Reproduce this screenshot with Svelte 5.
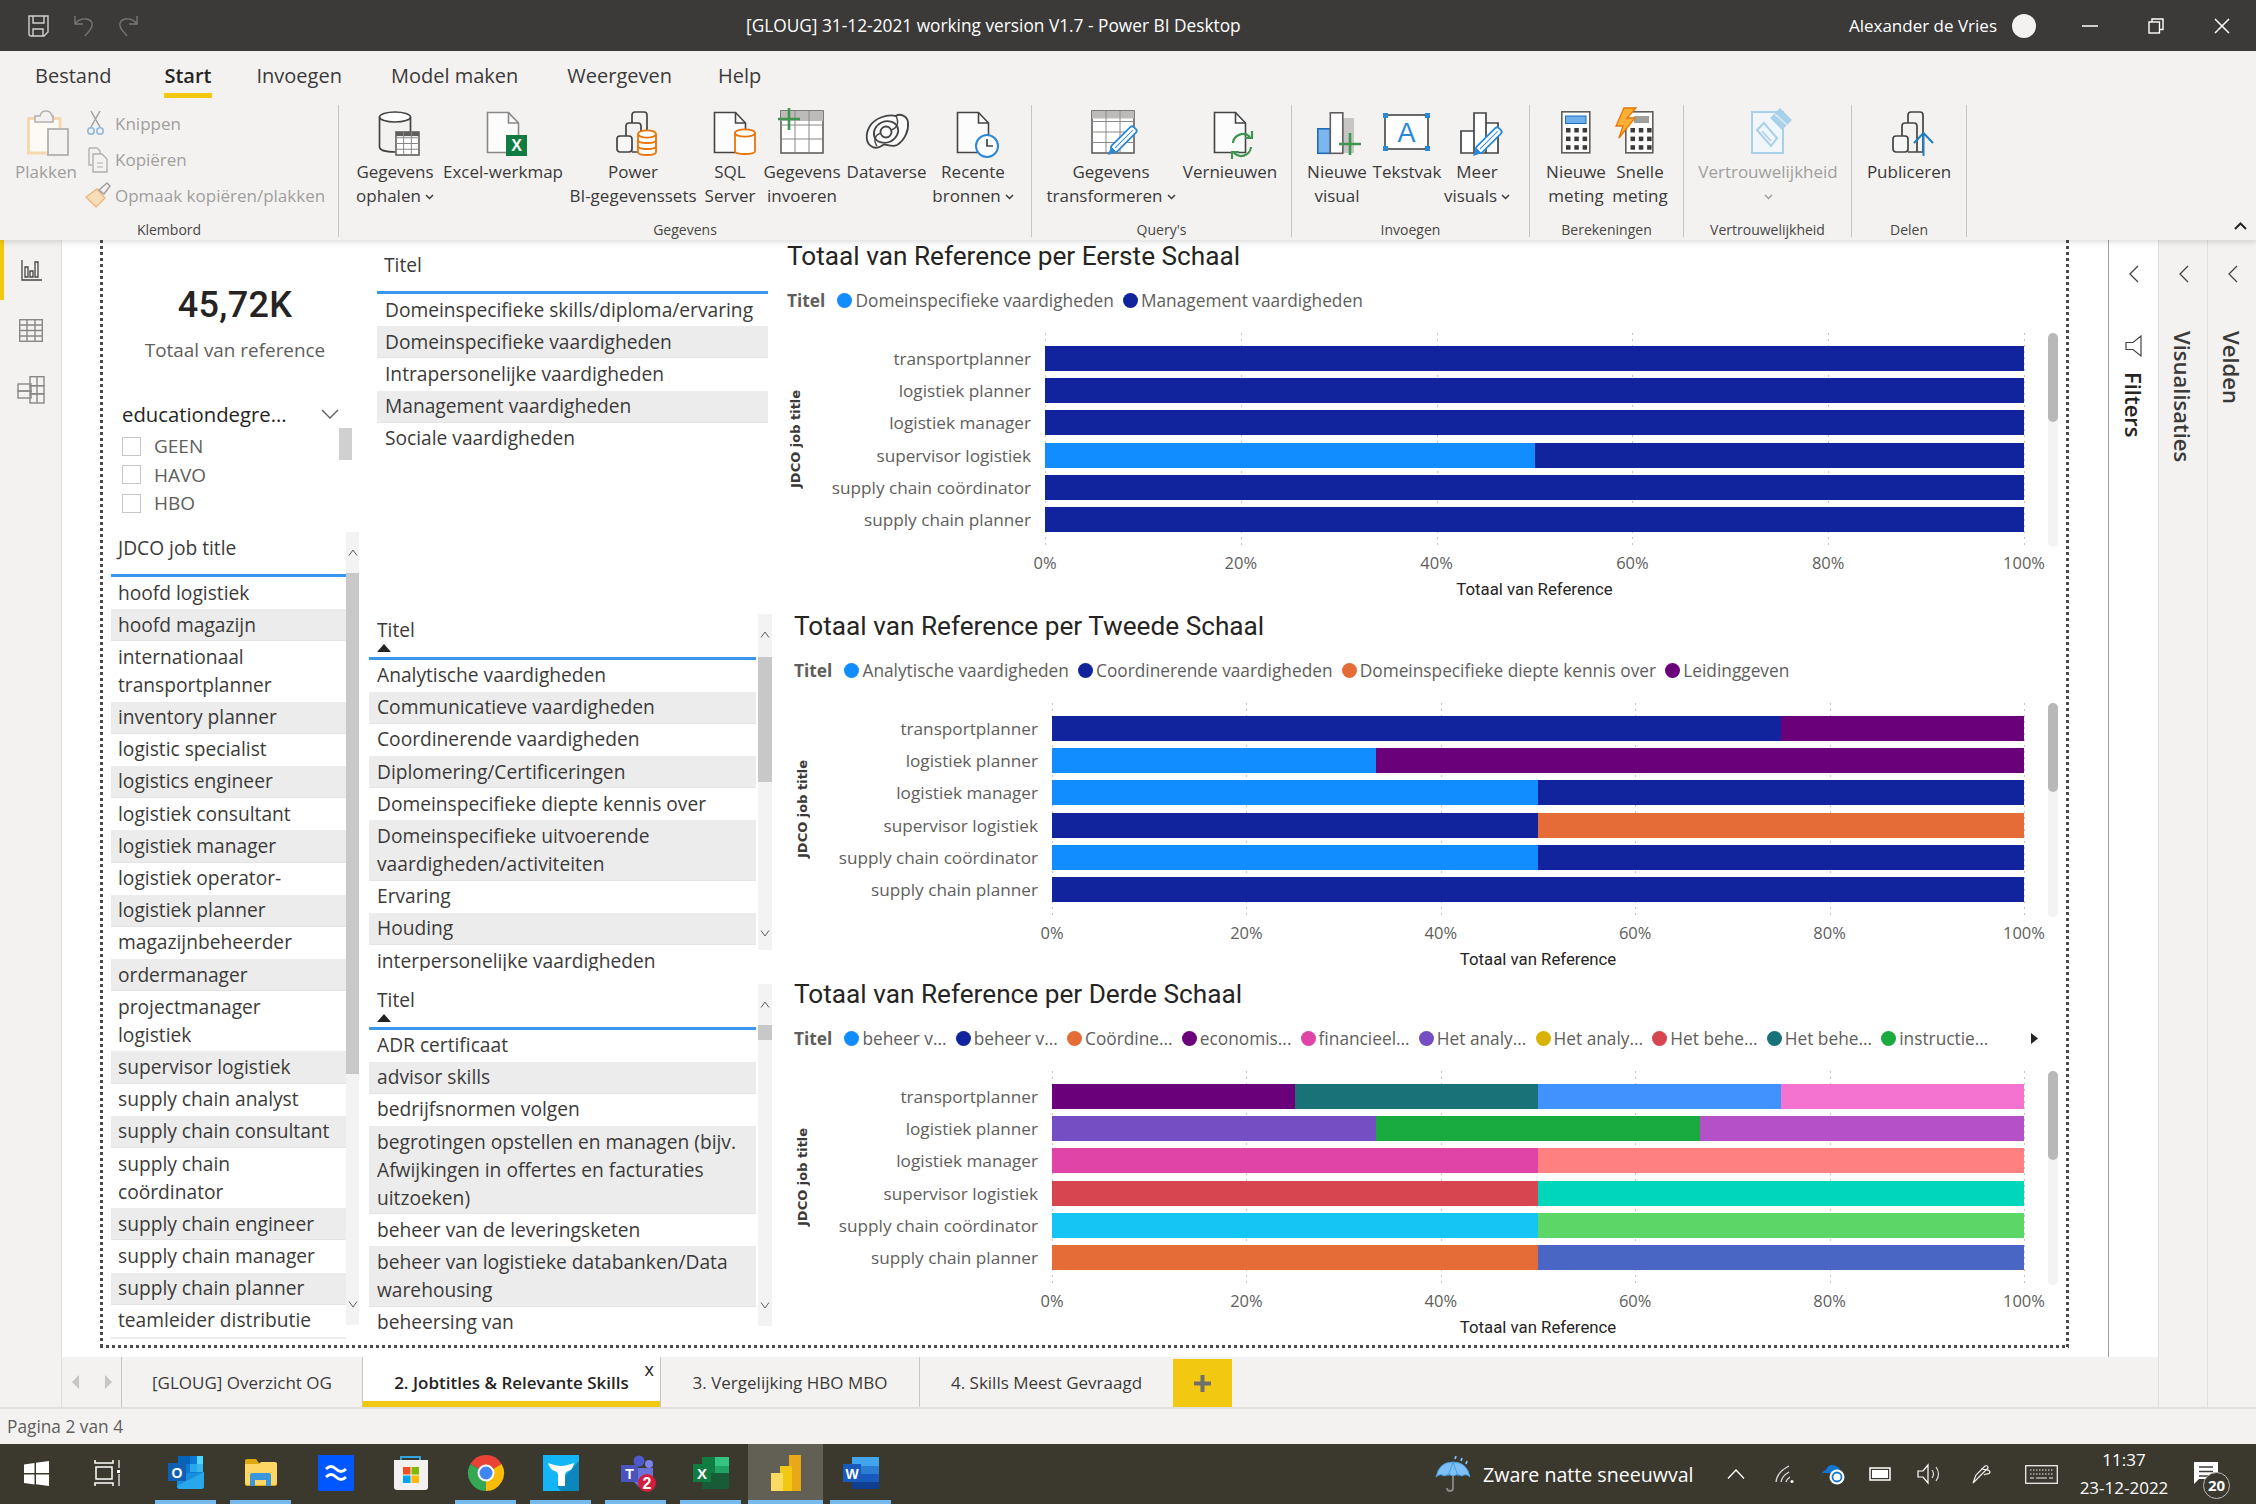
<script>
	const svg = (w, h, inner, box) =>
		`<svg xmlns="http://www.w3.org/2000/svg" width="${w}" height="${h}" viewBox="${box ?? `0 0 ${w} ${h}`}" fill="none" overflow="visible" display="block">${inner}</svg>`;

	const ORANGE = '#e8750a';
	const BLUE = '#2b88d8';
	const GREEN = '#3f9450';

	const doc = (s = '#444', x = 8.5) =>
		`<path d="M${x} 2.5H${x + 21}L${x + 31} 13V42.5H${x}Z" fill="#fcfcfc" stroke="${s}" stroke-width="1.6"/><path d="M${x + 21} 2.5V13H${x + 31}" stroke="${s}" stroke-width="1.6"/>`;
	const cyl = (cx, top, rx, bot, rings = []) =>
		`<path d="M${cx - rx} ${top}V${bot}c0 4 ${rx * 2} 4 ${rx * 2} 0V${top}" fill="#fff" stroke="${ORANGE}" stroke-width="1.8"/><ellipse cx="${cx}" cy="${top}" rx="${rx}" ry="3.6" fill="#fff" stroke="${ORANGE}" stroke-width="1.8"/>` +
		rings.map((r) => `<path d="M${cx - rx} ${r}c0 4 ${rx * 2} 4 ${rx * 2} 0" stroke="${ORANGE}" stroke-width="1.8"/>`).join('');
	const table = (x, y, w, h, cols, rows, head = '#bdbbb9') => {
		let out = `<rect x="${x}" y="${y}" width="${w}" height="${h}" fill="#fff" stroke="#605e5c" stroke-width="1.6"/><rect x="${x}" y="${y}" width="${w}" height="${h / (rows + 1) / 1.4}" fill="${head}"/>`;
		for (let i = 1; i < cols; i++) out += `<path d="M${x + (w * i) / cols} ${y}v${h}" stroke="#8a8886"/>`;
		for (let i = 1; i <= rows; i++) out += `<path d="M${x} ${y + (h * i) / (rows + 1)}h${w}" stroke="#8a8886"/>`;
		return out;
	};
	const pencil = (x, y) =>
		`<g transform="translate(${x} ${y}) rotate(45)"><rect x="-4" y="-38" width="8" height="31" rx="2.5" fill="#fff" stroke="${BLUE}" stroke-width="1.8"/><path d="M-4 -8H4L0 0Z" fill="${BLUE}"/><path d="M0 -35V-10" stroke="${BLUE}"/></g>`;
	const plus = (x, y, r = 11, c = GREEN) =>
		`<path d="M${x - r} ${y}H${x + r}M${x} ${y - r}V${y + r}" stroke="${c}" stroke-width="2.6"/>`;
	const bars = (s = '#444') =>
		`<path d="M23 13V5q0-3 3-3h9q3 0 3 3V42M17 26V16q0-3 3-3h9q3 0 3 3V42M23 42H38" stroke="${s}" stroke-width="1.7"/><rect x="8" y="26" width="15" height="16" rx="3" fill="#f7f7f7" stroke="${s}" stroke-width="1.7"/>`;
	const calcKeys = (x, y) => {
		let out = '';
		for (let r = 0; r < 3; r++)
			for (let c = 0; c < 3; c++)
				out += `<rect x="${x + c * 8.3}" y="${y + r * 8.6}" width="4.5" height="4.5" fill="#3b3a39"/>`;
		return out;
	};

	const ribbonIcons = {
		db: `<ellipse cx="24" cy="7" rx="15.5" ry="5" fill="#fff" stroke="#444" stroke-width="1.7"/><path d="M8.5 7V37c0 3 6 5 16 5M39.5 7V22" stroke="#444" stroke-width="1.7"/>${table(25, 22, 23, 23, 3, 3, '#605e5c')}`,
		excel: `${doc('#8a8886')}<rect x="27" y="25" width="21" height="21" fill="#107c41"/><text x="37.5" y="41" font-family="Liberation Sans" font-weight="700" font-size="16" fill="#fff" text-anchor="middle">X</text>`,
		dataset: `${bars()}${cyl(38, 24, 9, 42, [30, 36])}`,
		sql: `${doc('#444')}${cyl(39, 23, 10, 41)}`,
		enter: `${table(3, 1, 42, 42, 3, 2)}${plus(11, 9)}`,
		dataverse: `<path d="M8 36C3 33 2 24 7 16 12 8 24 4 33 6 37 3 44 6 45 12 46 20 42 30 34 35 28 38 23 33 20 35 16 38 12 39 8 36Z" fill="#fafafa" stroke="#444" stroke-width="1.8"/><ellipse cx="23" cy="22" rx="12.500" ry="10.500" transform="rotate(-25 23 22)" stroke="#444" stroke-width="1.800"/><circle cx="23" cy="22" r="5.500" stroke="#444" stroke-width="1.800"/><path d="M33 6C36 12 35 18 28 20M14 36C10 30 12 25 18 23" stroke="#444" stroke-width="1.400"/>`,
		recent: `${doc('#444')}<circle cx="38" cy="36" r="11" fill="#fff" stroke="${BLUE}" stroke-width="2"/><path d="M38 29v7h6" stroke="#444" stroke-width="1.7"/>`,
		transform: `${table(5, 1, 42, 42, 3, 3)}${pencil(21, 45)}`,
		refresh: `${doc('#444')}<path d="M27 33a10 10 0 0 1 17-6M45 37a10 10 0 0 1-17 6" stroke="${GREEN}" stroke-width="2.2"/><path d="M46 21v7h-7M26 49v-7h7" stroke="${GREEN}" stroke-width="2.2"/>`,
		visual: `<rect x="30" y="8" width="11" height="35" fill="#c8c6c4"/><rect x="4.8" y="18.8" width="12.5" height="24.5" fill="#7cb6ec" stroke="#1c6fb8" stroke-width="1.6"/><rect x="17.3" y="2.8" width="12.5" height="40.5" fill="#fff" stroke="#605e5c" stroke-width="1.6"/>${plus(37, 34)}`,
		text: `<rect x="2" y="5" width="43" height="34" fill="#fff" stroke="#444" stroke-width="1.6"/><path d="M0 3h5v5H0zM42 3h5v5h-5zM0 36h5v5H0zM42 36h5v5h-5z" fill="${BLUE}"/><text x="23.5" y="32" font-family="Liberation Sans" font-size="27" fill="${BLUE}" text-anchor="middle">A</text>`,
		more: `<path d="M33 43V13h12v30ZM21 43V3h12v40ZM8 43V21h13v22Z" fill="#fff" stroke="#444" stroke-width="1.7"/>${pencil(20, 46)}`,
		measure: `<rect x="9.800" y="1.800" width="28" height="41" fill="#fcfcfc" stroke="#605e5c" stroke-width="1.6"/><rect x="13.500" y="6" width="20.500" height="7.500" fill="#6fb0ea" stroke="#1c6fb8"/>${calcKeys(14, 18)}`,
		quick: `<rect x="9.800" y="1.800" width="27" height="41" fill="#fcfcfc" stroke="#605e5c" stroke-width="1.6"/><rect x="18" y="6" width="15" height="7" fill="#a19f9d"/>${calcKeys(14.500, 18)}<path d="M20-2H8L0 16H7L3 28 19 8H11Z" fill="#fbb034" stroke="${ORANGE}" stroke-width="1.300"/>`,
		label: `<path d="M8 2H39V43H8Z" fill="#f1f6fa" stroke="#a9d0e8" stroke-width="2"/><path d="M13 20 20 13 33 28 27 36Z" fill="#f1f6fa" stroke="#a9d0e8" stroke-width="2"/><path d="M18 21 27 31" stroke="#a9d0e8" stroke-width="1.500"/><path d="M26 8 36-2 48 10 38 20Z" fill="#a9d0e8"/><path d="M31 4 43 15" stroke="#dcecf6" stroke-width="1.500"/>`,
		publish: `${bars()}<path d="M38.500 46V24M29 33l9.500-10L48 33" stroke="#1f7fbf" stroke-width="2"/>`,
		paste: `<path d="M6.500 8.500H38V43H6.500Z" fill="#fdfaf4" stroke="#f5d9ae" stroke-width="3"/><path d="M13 12V6h5q1-5 6-5t6 5h1v6Z" fill="#f3f2f1" stroke="#b3b0ad" stroke-width="1.500"/><rect x="26" y="19" width="20" height="26" fill="#f3f2f1" stroke="#b3b0ad" stroke-width="1.800"/>`,
		cut: `<path d="M6 0 15 16M15 0 6 16" stroke="#a19f9d" stroke-width="1.500"/><circle cx="6" cy="20" r="3.200" stroke="#8db9dc" stroke-width="1.600"/><circle cx="15" cy="20" r="3.200" stroke="#8db9dc" stroke-width="1.600"/>`,
		copy: `<path d="M4 1h8l3 3v3M4 1v17h3" stroke="#b3b0ad" stroke-width="1.4"/><path d="M8 7h9l5 5v13H8Z" fill="#f3f2f1" stroke="#b3b0ad" stroke-width="1.4"/><path d="M12 16h6M12 20h6" stroke="#b3b0ad"/>`,
		brush: `<path d="M1 14 12 6 20 15 11 24Z" fill="#f7dcb8" stroke="#edb77f" stroke-width="1.400"/><path d="M14 7 22 0 25 3 19 11Z" fill="#f3f2f1" stroke="#a19f9d" stroke-width="1.500"/>`
	};

	const ribbon = [
		{ name: "Gegevens", width: 693, pad: 8, items: [
			{ w: 96, i: 'db', l: ['Gegevens', 'ophalen'], chev: true },
			{ w: 120, i: 'excel', l: ['Excel-werkmap'] },
			{ w: 140, i: 'dataset', l: ['Power', 'BI-gegevenssets'] },
			{ w: 54, i: 'sql', l: ['SQL', 'Server'] },
			{ w: 90, i: 'enter', l: ['Gegevens', 'invoeren'] },
			{ w: 79, i: 'dataverse', l: ['Dataverse'] },
			{ w: 94, i: 'recent', l: ['Recente', 'bronnen'], chev: true }
		] },
		{ name: "Query's", width: 260, pad: 8, items: [
			{ w: 142, i: 'transform', l: ['Gegevens', 'transformeren'], chev: true },
			{ w: 96, i: 'refresh', l: ['Vernieuwen'] }
		] },
		{ name: 'Invoegen', width: 238, pad: 8, items: [
			{ w: 74, i: 'visual', l: ['Nieuwe', 'visual'] },
			{ w: 66, i: 'text', l: ['Tekstvak'] },
			{ w: 74, i: 'more', l: ['Meer', 'visuals'], chev: true }
		] },
		{ name: 'Berekeningen', width: 154, pad: 10, items: [
			{ w: 72, i: 'measure', l: ['Nieuwe', 'meting'] },
			{ w: 56, i: 'quick', l: ['Snelle', 'meting'] }
		] },
		{ name: 'Vertrouwelijkheid', width: 168, pad: 4, off: true, items: [
			{ w: 160, i: 'label', l: ['Vertrouwelijkheid', ''], chev: true }
		] },
		{ name: 'Delen', width: 115, pad: 8, items: [
			{ w: 98, i: 'publish', l: ['Publiceren'] }
		] }
	];

	const jobs = [
		'hoofd logistiek', 'hoofd magazijn', 'internationaal\ntransportplanner', 'inventory planner',
		'logistic specialist', 'logistics engineer', 'logistiek consultant', 'logistiek manager',
		'logistiek operator-', 'logistiek planner', 'magazijnbeheerder', 'ordermanager',
		'projectmanager\nlogistiek', 'supervisor logistiek', 'supply chain analyst',
		'supply chain consultant', 'supply chain\ncoördinator', 'supply chain engineer',
		'supply chain manager', 'supply chain planner', 'teamleider distributie', ' '
	];
	const titlesA = ['Domeinspecifieke skills/diploma/ervaring', 'Domeinspecifieke vaardigheden', 'Intrapersonelijke vaardigheden', 'Management vaardigheden', 'Sociale vaardigheden'];
	const titlesB = ['Analytische vaardigheden', 'Communicatieve vaardigheden', 'Coordinerende vaardigheden', 'Diplomering/Certificeringen', 'Domeinspecifieke diepte kennis over', 'Domeinspecifieke uitvoerende\nvaardigheden/activiteiten', 'Ervaring', 'Houding', 'interpersonelijke vaardigheden'];
	const titlesC = ['ADR certificaat', 'advisor skills', 'bedrijfsnormen volgen', 'begrotingen opstellen en managen (bijv.\nAfwijkingen in offertes en facturaties\nuitzoeken)', 'beheer van de leveringsketen', 'beheer van logistieke databanken/Data\nwarehousing', 'beheersing van'];

	const C = {
		blue: '#118dff', navy: '#12239e', orange: '#e66c37', purple: '#6b007b', pink: '#e044a7',
		violet: '#744ec2', yellow: '#d9b300', red: '#d64550', teal: '#197278', green: '#1aab40',
		sky: '#15c6f4', mid: '#4092ff', rose: '#f472d0', salmon: '#ff8080', aqua: '#00d6b9',
		lime: '#5bd667', steel: '#4a66c4', orchid: '#b451c8'
	};
	const people = ['transportplanner', 'logistiek planner', 'logistiek manager', 'supervisor logistiek', 'supply chain coördinator', 'supply chain planner'];

	const charts = [
		{
			h: 370,
			title: 'Totaal van Reference per Eerste Schaal',
			legend: [[C.blue, 'Domeinspecifieke vaardigheden'], [C.navy, 'Management vaardigheden']],
			rows: [[[C.navy, 100]], [[C.navy, 100]], [[C.navy, 100]], [[C.blue, 50], [C.navy, 50]], [[C.navy, 100]], [[C.navy, 100]]]
		},
		{
			h: 368,
			title: 'Totaal van Reference per Tweede Schaal',
			indent: true,
			legend: [[C.blue, 'Analytische vaardigheden'], [C.navy, 'Coordinerende vaardigheden'], [C.orange, 'Domeinspecifieke diepte kennis over'], [C.purple, 'Leidinggeven']],
			rows: [[[C.navy, 75], [C.purple, 25]], [[C.blue, 33.33], [C.purple, 66.67]], [[C.blue, 50], [C.navy, 50]], [[C.navy, 50], [C.orange, 50]], [[C.blue, 50], [C.navy, 50]], [[C.navy, 100]]]
		},
		{
			h: 369,
			title: 'Totaal van Reference per Derde Schaal',
			indent: true,
			more: true,
			legend: [[C.blue, 'beheer v...'], [C.navy, 'beheer v...'], [C.orange, 'Coördine...'], [C.purple, 'economis...'], [C.pink, 'financieel...'], [C.violet, 'Het analy...'], [C.yellow, 'Het analy...'], [C.red, 'Het behe...'], [C.teal, 'Het behe...'], [C.green, 'instructie...']],
			rows: [[[C.purple, 25], [C.teal, 25], [C.mid, 25], [C.rose, 25]], [[C.violet, 33.33], [C.green, 33.33], [C.orchid, 33.34]], [[C.pink, 50], [C.salmon, 50]], [[C.red, 50], [C.aqua, 50]], [[C.sky, 50], [C.lime, 50]], [[C.orange, 50], [C.steel, 50]]]
		}
	];
	const ticks = ['0%', '20%', '40%', '60%', '80%', '100%'];

	const pageTabs = [
		{ w: 241, label: '[GLOUG] Overzicht OG' },
		{ w: 298, label: '2. Jobtitles & Relevante Skills', active: true },
		{ w: 259, label: '3. Vergelijking HBO MBO' },
		{ w: 254, label: '4. Skills Meest Gevraagd' }
	];

	const glyph = (t, x, y, s, fill = '#fff') =>
		`<text x="${x}" y="${y}" font-family="Liberation Sans" font-weight="700" font-size="${s}" fill="${fill}" text-anchor="middle">${t}</text>`;

	const taskbarIcons = [
		{ w: 72, svg: svg(25, 25, `<path d="M0 3.500 10.500 2V12H0ZM12 1.800 25 0V12H12ZM0 13.500H10.500V23.500L0 22ZM12 13.500H25V25L12 23.300Z" fill="#fff"/>`) },
		{ w: 76, svg: svg(26, 28, `<g transform="translate(-3)"><path d="M1 1v3h18V1M1 27v-3h18v3" stroke="#fff" stroke-width="1.500"/><rect x="2" y="8" width="16" height="12" stroke="#fff" stroke-width="1.500"/><path d="M25 1v8M25 15v12" stroke="#fff" stroke-width="1.200"/><rect x="23" y="11" width="3" height="3" fill="#fff"/></g>`) },
		{ w: 75, on: true, svg: svg(36, 36, `<path d="M10 1H31Q35 1 35 5V19H10Z" fill="#0f78d4"/><path d="M10 1H22V9H10Z" fill="#0364b8"/><path d="M22 1H29V9H22Z" fill="#0f78d4"/><path d="M29 1H35V9H29Z" fill="#50d9ff"/><path d="M22 9H29V17H22Z" fill="#28a8ea"/><path d="M29 9H35V17H29Z" fill="#38b6f0"/><path d="M9 19 36 17V31Q36 34 33 34H12Q9 34 9 31Z" fill="#1490df"/><path d="M9 31 36 17V31Q36 34 33 34H12Q9 34 9 31Z" fill="#28a8ea"/><rect x="0" y="8" width="18" height="18" rx="1" fill="#0f5fb3"/>${glyph('O', 9, 23, 14)}`) },
		{ w: 75, on: true, svg: svg(36, 36, `<path d="M2 6q0-2 2-2H13l3 4H34V29q0 2-2 2H4q-2 0-2-2Z" fill="#e0a70d"/><path d="M2 9H16L18 7H32q2 0 2 2V28q0 2-2 2H4q-2 0-2-2Z" fill="#fdd664"/><path d="M7 31V20q0-2 2-2H26q2 0 2 2V31H23V25H12V31Z" fill="#3a96dd"/>`) },
		{ w: 75, svg: svg(36, 36, `<rect width="36" height="36" fill="#0056ff"/><path d="M8 14q5-5 10 0t10 0M8 22q5-5 10 0t10 0" stroke="#fff" stroke-width="2.800"/>`) },
		{ w: 75, svg: svg(36, 36, `<path d="M8 6V2H27V6" stroke="#32a4e0" stroke-width="2"/><path d="M1 5H35V32q0 3-3 3H4q-3 0-3-3Z" fill="#f3f1ef"/><path d="M10 12h7.500v7.500H10z" fill="#f25022"/><path d="M18.500 12H26v7.500H18.500z" fill="#7fba00"/><path d="M10 20.500h7.500V28H10z" fill="#00a4ef"/><path d="M18.500 20.500H26V28H18.500z" fill="#ffb900"/>`) },
		{ w: 75, on: true, svg: svg(36, 36, `<path d="M18 18 33.600 9A18 18 0 0 0 2.400 9Z" fill="#ea4335"/><path d="M18 18 2.400 9A18 18 0 0 0 18 36Z" fill="#34a853"/><path d="M18 18 18 36A18 18 0 0 0 33.600 9Z" fill="#fbbc05"/><circle cx="18" cy="18" r="8.500" fill="#fff"/><circle cx="18" cy="18" r="6.500" fill="#4285f4"/>`) },
		{ w: 75, on: true, svg: svg(36, 36, `<rect width="36" height="36" fill="#12b5f5"/><path d="M36 6V36H18L14 31 30 12Z" fill="#0b87bd"/><path d="M5 8Q13 11 18 11T31 8Q30 15 25 16 22 17 22 20V31H15V20Q15 17 12 16 7 15 5 8Z" fill="#fff"/>`) },
		{ w: 75, on: true, svg: svg(36, 36, `<circle cx="21" cy="6" r="5.500" fill="#5059c9"/><circle cx="31" cy="9" r="4" fill="#7b83eb"/><path d="M15 13H35V27q0 7-8 7-5 0-8-4l-4-4Z" fill="#6a72d6"/><rect x="3" y="10" width="17" height="17" fill="#4b53bc"/>${glyph('T', 11.500, 24, 14)}<circle cx="29" cy="28" r="9" fill="#d01e3c"/>${glyph('2', 29, 34, 16)}`) },
		{ w: 75, on: true, svg: svg(36, 36, `<path d="M9 2H36V34H9Z" fill="#21a366"/><path d="M9 2H22V18H9Z" fill="#107c41"/><path d="M22 2H36V11H22Z" fill="#33c481"/><path d="M9 18H36V34H9Z" fill="#185c37"/><rect y="9" width="18" height="18" fill="#107c41"/>${glyph('X', 9, 24, 15)}`) },
		{ w: 75, on: true, active: true, svg: svg(30, 36, `<rect x="18" width="12" height="36" fill="#e8a818"/><rect x="9" y="11" width="12" height="25" fill="#f2c811"/><rect y="18" width="12" height="18" fill="#fbdb64"/>`) },
		{ w: 75, on: true, svg: svg(36, 36, `<path d="M9 2H36V34H9Z" fill="#2b7cd3"/><path d="M9 2H36V11H9Z" fill="#41a5ee"/><path d="M9 19H36V27H9Z" fill="#185abd"/><path d="M9 27H36V34H9Z" fill="#103f91"/><rect y="9" width="18" height="18" fill="#185abd"/>${glyph('W', 9, 24, 14)}`) }
	];

	const trays = [
		{ w: 48, svg: svg(18, 10, `<path d="M1 9.500 9 1l8 8.500" stroke="#fff" stroke-width="1.300"/>`) },
		{ w: 50, svg: svg(20, 18, `<path d="M1 17Q2 7 14 1M6 17q1-6 8-10M11 17q1-3 4-5" stroke="#ddd" stroke-width="1.300"/><circle cx="17" cy="16.500" r="1.500" fill="#fff"/>`) },
		{ w: 45, svg: svg(26, 22, `<path d="M2 15q-2-6 4-8 3-7 10-4 5 2 4 7H2Z" fill="#0f78d4"/><circle cx="17" cy="14" r="7.500" fill="#fff"/><circle cx="17" cy="14" r="4.500" stroke="#0f78d4" stroke-width="1.800"/>`) },
		{ w: 50, svg: svg(22, 14, `<rect x="1" y="1" width="20" height="12" stroke="#fff" stroke-width="1.500"/><rect x="3" y="3" width="16" height="8" fill="#fff"/>`) },
		{ w: 47, svg: svg(23, 20, `<path d="M1 7H6L11 1V19L6 13H1Z" stroke="#fff" stroke-width="1.200"/><path d="M15 6q3 4 0 8M19 3q5 7 0 14" stroke="#ddd" stroke-width="1.200"/>`) },
		{ w: 60, svg: svg(20, 20, `<path d="M1 19 4 11 13 2q3-1 3 2L7 13Zm8-14c5 1 9 0 9 3s-4 1-6 3" stroke="#eee" stroke-width="1.200"/>`) },
		{ w: 58, svg: svg(33, 19, `<rect x=".7" y=".7" width="31.600" height="17.600" stroke="#eee" stroke-width="1.300"/><path d="M5 5h23" stroke="#eee" stroke-dasharray="1.500 1.500"/><path d="M5 9h23" stroke="#eee" stroke-dasharray="1.500 1.500"/><path d="M5 13h4M11 13h11M24 13h4" stroke="#eee"/>`) }
	];

	const icon = (name) => svg(48, 48, ribbonIcons[name]);
	const small = (name) => svg(24, 25, ribbonIcons[name]);
</script>

{#snippet rows(items)}
	{#each items as item, i}
		<div class="row" class:alt={i % 2 === 1}>{item}</div>
	{/each}
{/snippet}

{#snippet bar(top, height, upY, downY)}
	<div class="sb">
		<div class="sb-thumb" style={`top:${top}px;height:${height}px`}></div>
		<svg class="sb-arrow" style={`top:${upY}px`} width="10" height="7" viewBox="0 0 10 7"><path d="M1 6.500 5 1l4 5.500" fill="none" stroke="#605e5c" /></svg>
		<svg class="sb-arrow" style={`bottom:${downY}px`} width="10" height="7" viewBox="0 0 10 7"><path d="M1 .5 5 6l4-5.500" fill="none" stroke="#605e5c" /></svg>
	</div>
{/snippet}

{#snippet chart(c)}
	<section class="chart" class:indent={c.indent} style={`height:${c.h}px`}>
		<h2>{c.title}</h2>
		<div class="legend">
			<b>Titel</b>
			{#each c.legend as [color, label]}
				<span class="lg"><i style={`background:${color}`}></i>{label}</span>
			{/each}
			{#if c.more}
				<svg class="lg-more" width="7" height="11" viewBox="0 0 7 11"><path d="M0 0 7 5.500 0 11Z" fill="#252423" /></svg>
			{/if}
		</div>
		<div class="plot-row">
			<div class="y-title">JDCO job title</div>
			<div class="plot-col">
				<div class="plot">
					<div class="grid-lines">
						{#each ticks as t}<span></span>{/each}
					</div>
					{#each people as p, i}
						<div class="plot-line">
							<span class="cat">{p}</span>
							<div class="stack">
								{#each c.rows[i] as [color, pct]}
									<span style={`background:${color};width:${pct}%`}></span>
								{/each}
							</div>
						</div>
					{/each}
				</div>
				<div class="axis">
					{#each ticks as t}<span><em>{t}</em></span>{/each}
				</div>
				<div class="x-title">Totaal van Reference</div>
			</div>
			<div class="chart-scroll"><div></div></div>
		</div>
	</section>
{/snippet}

<div class="app">
	<header class="titlebar">
		<div class="tb-left">
			<svg width="21" height="22" viewBox="0 0 21 22" fill="none" stroke="#d2d0ce" stroke-width="1.400"><path d="M1 1H20V17L16 21H3Q1 21 1 19Z" /><path d="M5 1V8H16V1M5 21V14H15V21" /></svg>
			<svg width="21" height="22" viewBox="0 0 21 22" fill="none" stroke="#797775" stroke-width="1.400"><path d="M2 1V9H10M2 9C8 1 21 3 19 11 18 15 14 18 12 21" /></svg>
			<svg width="21" height="22" viewBox="0 0 21 22" fill="none" stroke="#797775" stroke-width="1.400"><path d="M19 1V9H11M19 9C13 1 0 3 2 11 3 15 7 18 9 21" /></svg>
		</div>
		<div class="tb-title">[GLOUG] 31-12-2021 working version V1.7 - Power BI Desktop</div>
		<div class="tb-right">
			<span class="tb-user">Alexander de Vries</span>
			<span class="tb-avatar"></span>
			<span class="tb-ctl"><svg width="16" height="2" viewBox="0 0 16 2"><path d="M0 1H16" stroke="#fff" stroke-width="1.500" /></svg></span>
			<span class="tb-ctl"><svg width="16" height="16" viewBox="0 0 16 16" fill="none" stroke="#fff" stroke-width="1.400"><path d="M4 4V1H15V11.500H11.500" /><rect x="1" y="4" width="10.500" height="11" /></svg></span>
			<span class="tb-ctl"><svg width="16" height="16" viewBox="0 0 16 16"><path d="M1 1 15 15M15 1 1 15" stroke="#fff" stroke-width="1.500" /></svg></span>
		</div>
	</header>

	<nav class="ribbon">
		<div class="rtabs">
			<span class="rtab">Bestand</span>
			<span class="rtab current">Start</span>
			<span class="rtab">Invoegen</span>
			<span class="rtab">Model maken</span>
			<span class="rtab">Weergeven</span>
			<span class="rtab">Help</span>
		</div>
		<div class="rbody">
			<div class="rgroup clip" style="width:339px">
				<div class="rbtns">
					<div class="rbtn off plakken">
						<span class="ico">{@html icon('paste')}</span>
						<span class="rl">Plakken</span>
					</div>
					<div class="smalls">
						<div class="small"><span class="sico">{@html small('cut')}</span>Knippen</div>
						<div class="small"><span class="sico">{@html small('copy')}</span>Kopiëren</div>
						<div class="small"><span class="sico">{@html small('brush')}</span>Opmaak kopiëren/plakken</div>
					</div>
				</div>
				<div class="gname">Klembord</div>
			</div>
			{#each ribbon as g}
				<div class="rgroup" style={`width:${g.width}px;padding-left:${g.pad}px`}>
					<div class="rbtns">
						{#each g.items as b}
							<div class="rbtn" class:off={g.off} style={`width:${b.w}px`}>
								<span class="ico">{@html icon(b.i)}</span>
								{#each b.l as line, i}
									<span class="rl">{line}{#if b.chev && i === b.l.length - 1}<svg class="chev" width="9" height="6" viewBox="0 0 9 6"><path d="M1 1 4.500 4.500 8 1" fill="none" stroke="currentColor" stroke-width="1.500" /></svg>{/if}</span>
								{/each}
							</div>
						{/each}
					</div>
					<div class="gname" style={`margin-left:-${g.pad}px`}>{g.name}</div>
				</div>
			{/each}
			<svg class="collapse" width="13" height="8" viewBox="0 0 13 8"><path d="M1 7 6.500 1.500 12 7" fill="none" stroke="#252423" stroke-width="2" /></svg>
		</div>
	</nav>

	<div class="main">
		<aside class="rail">
			<div class="rail-item on">
				<svg width="21" height="21" viewBox="0 0 21 21" fill="none" stroke="#444" stroke-width="1.300"><path d="M1 0V20H21" /><path d="M4 7H7V17H4ZM9 11H12V17H9ZM14 2H17V17H14Z" /></svg>
			</div>
			<div class="rail-item">
				<svg width="24" height="23" viewBox="0 0 24 23" fill="none" stroke="#8a8886" stroke-width="1.400"><rect x=".7" y=".7" width="22.600" height="21.600" /><path d="M.7 6H23M.7 11.500H23M.7 17H23M8 .7V22M16 .7V22" /></svg>
			</div>
			<div class="rail-item">
				<svg width="28" height="28" viewBox="0 0 28 28" fill="none" stroke="#8a8886" stroke-width="1.400"><rect x="13" y=".7" width="14" height="9" /><rect x="13" y="9.700" width="14" height="8" /><rect x="1" y="8" width="13" height="7" /><rect x="1" y="15" width="13" height="7" /><rect x="13" y="18" width="14" height="9" /><path d="M20 1V27" /></svg>
			</div>
		</aside>

		<div class="center">
			<div class="canvas">
				<div class="page">
					<div class="col-a">
						<div class="kpi">45,72K</div>
						<div class="kpi-label">Totaal van reference</div>
						<div class="slicer-head">
							<span>educationdegre...</span>
							<svg width="18" height="10" viewBox="0 0 18 10"><path d="M1 1 9 9l8-8" fill="none" stroke="#605e5c" stroke-width="1.300" /></svg>
						</div>
						<div class="slicer">
							<div class="sl-items">
								<div class="sl-item"><i></i>GEEN</div>
								<div class="sl-item"><i></i>HAVO</div>
								<div class="sl-item"><i></i>HBO</div>
							</div>
							<div class="sl-thumb"></div>
						</div>
						<div class="tbl tbl-jobs">
							<div class="tbl-main">
								<div class="th">JDCO job title</div>
								<div class="tb">{@render rows(jobs)}</div>
							</div>
							{@render bar(41, 501, 17, 17)}
						</div>
					</div>

					<div class="col-b">
						<div class="tbl-a">
							<div class="th">Titel</div>
							{@render rows(titlesA)}
						</div>
						<div class="tbl tbl-b">
							<div class="tbl-main">
								<div class="th sorted">Titel<svg width="14" height="8" viewBox="0 0 14 8"><path d="M7 0 14 8H0Z" fill="#252423" /></svg></div>
								<div class="tb">{@render rows(titlesB)}</div>
							</div>
							{@render bar(43, 125, 17, 13)}
						</div>
						<div class="tbl tbl-c">
							<div class="tbl-main">
								<div class="th sorted">Titel<svg width="14" height="8" viewBox="0 0 14 8"><path d="M7 0 14 8H0Z" fill="#252423" /></svg></div>
								<div class="tb">{@render rows(titlesC)}</div>
							</div>
							{@render bar(41, 15, 17, 17)}
						</div>
					</div>

					<div class="col-c">
						{#each charts as c}
							{@render chart(c)}
						{/each}
					</div>
				</div>

				<aside class="filters">
					<svg class="pane-chev" width="11" height="18" viewBox="0 0 11 18"><path d="M10 1 2 9l8 8" fill="none" stroke="#444" stroke-width="1.300" /></svg>
					<svg class="funnel" width="17" height="22" viewBox="0 0 17 22"><path d="M16 1V21L8 14.500H1V7.500H8Z" fill="none" stroke="#444" stroke-width="1.200" /></svg>
					<span class="pane-text">Filters</span>
				</aside>
			</div>

			<div class="pagebar">
				<div class="nav">
					<svg width="8" height="14" viewBox="0 0 8 14"><path d="M7 0V14L0 7Z" fill="#c8c6c4" /></svg>
					<svg width="8" height="14" viewBox="0 0 8 14"><path d="M1 0V14L8 7Z" fill="#c8c6c4" /></svg>
				</div>
				{#each pageTabs as t}
					<div class="ptab" class:active={t.active} style={`width:${t.w}px`}>
						{t.label}
						{#if t.active}<span class="px">x</span>{/if}
					</div>
				{/each}
				<div class="padd">
					<svg width="17" height="17" viewBox="0 0 17 17"><path d="M8.500 0V17M0 8.500H17" stroke="#6e6e6e" stroke-width="4" /></svg>
				</div>
			</div>
		</div>

		<aside class="pane">
			<svg class="pane-chev" width="11" height="18" viewBox="0 0 11 18"><path d="M10 1 2 9l8 8" fill="none" stroke="#444" stroke-width="1.300" /></svg>
			<span class="pane-text lower">Visualisaties</span>
		</aside>
		<aside class="pane">
			<svg class="pane-chev" width="11" height="18" viewBox="0 0 11 18"><path d="M10 1 2 9l8 8" fill="none" stroke="#444" stroke-width="1.300" /></svg>
			<span class="pane-text lower">Velden</span>
		</aside>
	</div>

	<div class="status">Pagina 2 van 4</div>

	<footer class="taskbar">
		<div class="tasks">
			{#each taskbarIcons as t}
				<div class="task" class:on={t.on} class:active={t.active} style={`width:${t.w}px`}>{@html t.svg}</div>
			{/each}
		</div>
		<div class="sys">
			<svg class="umbrella" width="36" height="36" viewBox="0 0 36 36" fill="none">
				<path d="M1 21Q4 6 18 6T35 21Q31 17 27 20 22 17 18 20 14 17 9 20 5 17 1 21Z" fill="#7cc0f5" stroke="#4a9ade" />
				<path d="M18 20V32q0 3-3 3t-3-3" stroke="#8a8886" stroke-width="1.800" />
				<path d="M18 6 13 20M18 6 23 20" stroke="#4a9ade" />
				<path d="M20 3 21 0M26 5 27 2M31 8 32 5" stroke="#7cc0f5" stroke-width="1.800" />
			</svg>
			<span class="weather">Zware natte sneeuwval</span>
			<div class="tray">
				{#each trays as t}
					<span class="tray-item" style={`width:${t.w}px`}>{@html t.svg}</span>
				{/each}
			</div>
			<div class="clock"><span>11:37</span><span>23-12-2022</span></div>
			<div class="notif">
				<svg width="24" height="24" viewBox="0 0 24 24"><path d="M0 0H24V17H5L0 22Z" fill="#fff" /><path d="M5 5H19M5 9.500H19M5 14H19" stroke="#3b3a39" stroke-width="1.500" /></svg>
				<span class="badge">20</span>
			</div>
		</div>
	</footer>
</div>

<style>
	:global(body) {
		margin: 0;
		background: #f3f2f1;
	}

	.app {
		width: 2256px;
		height: 1504px;
		display: flex;
		flex-direction: column;
		overflow: hidden;
		font-family: 'Open Sans', 'Noto Sans', sans-serif;
		color: #3b3a39;
	}

	/* title bar */
	.titlebar {
		height: 51px;
		flex: none;
		background: #3b3a39;
		color: #fff;
		display: flex;
		align-items: center;
		position: relative;
		font-size: 17.300px;
	}
	.tb-left {
		display: flex;
		gap: 24px;
		padding-left: 28px;
	}
	.tb-title {
		position: absolute;
		left: 746px;
		white-space: nowrap;
	}
	.tb-right {
		margin-left: auto;
		display: flex;
		align-items: center;
	}
	.tb-user {
		font-size: 17px;
	}
	.tb-avatar {
		width: 24px;
		height: 24px;
		border-radius: 50%;
		background: #f3f2f1;
		margin-left: 15px;
		margin-right: 21px;
	}
	.tb-ctl {
		width: 66px;
		display: flex;
		justify-content: center;
	}
	.tb-ctl:last-child {
		margin-right: 1px;
	}

	/* ribbon */
	.ribbon {
		height: 189px;
		flex: none;
		background: #f3f2f1;
		box-shadow: 0 2px 6px rgba(0, 0, 0, 0.14);
		position: relative;
		z-index: 3;
	}
	.rtabs {
		height: 54px;
		display: flex;
		padding-left: 35px;
		gap: 49px;
		font-size: 20px;
	}
	.rtab {
		height: 47px;
		line-height: 50px;
		box-sizing: border-box;
	}
	.rtab:nth-child(2) {
		margin-left: 4px;
	}
	.rtab:nth-child(3) {
		margin-left: -4px;
	}
	.rtab:nth-child(6) {
		margin-left: -3px;
	}
	.current {
		font-weight: 600;
		border-bottom: 5px solid #f2c811;
		color: #252423;
	}
	.rbody {
		display: flex;
		position: relative;
		height: 132px;
		font-size: 17px;
	}
	.rgroup {
		box-sizing: border-box;
		height: 132px;
		border-right: 1px solid #c8c6c4;
		display: flex;
		flex-direction: column;
		flex: none;
	}
	.rbtns {
		flex: 1;
		display: flex;
		min-height: 0;
	}
	.rbtn {
		display: flex;
		flex-direction: column;
		align-items: center;
		white-space: nowrap;
		flex: none;
		color: #3b3a39;
	}
	.rbtn.off {
		color: #a19f9d;
	}
	.plakken {
		width: 72px;
		margin-left: 10px;
	}
	.ico {
		display: block;
		margin-top: 5px;
		margin-bottom: 2px;
		height: 48px;
	}
	.rl {
		height: 24px;
		line-height: 24px;
		display: flex;
		align-items: center;
		gap: 4px;
	}
	.chev {
		margin-top: 2px;
	}
	.smalls {
		color: #a19f9d;
		margin-left: 3px;
	}
	.small {
		height: 36px;
		display: flex;
		align-items: center;
		white-space: nowrap;
	}
	.sico {
		width: 30px;
		flex: none;
	}
	.gname {
		text-align: center;
		font-size: 14px;
		line-height: 20px;
		margin-bottom: -3px;
		color: #484644;
	}
	.collapse {
		position: absolute;
		right: 9px;
		top: 117px;
	}

	/* main area */
	.main {
		flex: 1;
		min-height: 0;
		display: flex;
		box-sizing: border-box;
		border-bottom: 2px solid #e1dfdd;
	}
	.rail {
		width: 62px;
		flex: none;
		box-sizing: border-box;
		border-right: 1px solid #e1dfdd;
		background: #f3f2f1;
	}
	.rail-item {
		height: 60px;
		display: flex;
		align-items: center;
		justify-content: center;
		box-sizing: border-box;
	}
	.rail-item.on {
		border-left: 4px solid #f2c811;
		padding-right: 2px;
	}
	.center {
		flex: 1;
		min-width: 0;
		display: flex;
		flex-direction: column;
	}
	.canvas {
		height: 1117px;
		flex: none;
		background: #fff;
		display: flex;
		padding-left: 38px;
		box-sizing: border-box;
	}
	.page {
		width: 1969px;
		height: 1108px;
		flex: none;
		display: flex;
		box-sizing: border-box;
		padding: 0 3px 3px 11px;
		background-image:
			repeating-linear-gradient(to bottom, #4a4a4a 0 3px, transparent 3px 6px),
			repeating-linear-gradient(to bottom, #4a4a4a 0 3px, transparent 3px 6px),
			repeating-linear-gradient(to right, #4a4a4a 0 3px, transparent 3px 6px);
		background-size: 3px 100%, 3px 100%, 100% 3px;
		background-position: left top, right top, left bottom;
		background-repeat: no-repeat;
	}

	/* first column */
	.col-a {
		width: 248px;
		flex: none;
		margin-right: 10px;
	}
	.kpi {
		margin-top: 43px;
		height: 44px;
		line-height: 44px;
		text-align: center;
		font-family: Roboto, sans-serif;
		font-weight: 500;
		font-size: 36px;
		letter-spacing: 0.300px;
		color: #252423;
	}
	.kpi-label {
		margin-top: 9px;
		line-height: 28px;
		text-align: center;
		font-size: 18.900px;
		color: #605e5c;
	}
	.slicer-head {
		margin-top: 36px;
		height: 28px;
		display: flex;
		align-items: center;
		justify-content: space-between;
		padding: 0 20px 0 11px;
		font-size: 20.300px;
		font-weight: 500;
		color: #252423;
	}
	.slicer {
		height: 90px;
		display: flex;
		justify-content: space-between;
		padding-left: 11px;
		padding-right: 7px;
	}
	.sl-items {
		padding-top: 4px;
	}
	.sl-item {
		height: 28.500px;
		display: flex;
		align-items: center;
		gap: 13px;
		font-size: 19px;
		color: #605e5c;
	}
	.sl-item i {
		width: 19px;
		height: 19px;
		border: 1.500px solid #c8c6c4;
		box-sizing: border-box;
	}
	.sl-thumb {
		width: 13px;
		height: 32px;
		background: #d0d0d0;
	}
	.tbl {
		display: flex;
		overflow: hidden;
	}
	.tbl-jobs {
		margin-top: 14px;
		height: 807px;
	}
	.tbl-main {
		flex: 1;
		min-width: 0;
		display: flex;
		flex-direction: column;
	}
	.th {
		height: 45px;
		box-sizing: border-box;
		padding: 2px 7px 0;
		line-height: 28px;
		font-size: 19.200px;
		border-bottom: 3px solid #3a96f0;
		flex: none;
		color: #3b3a39;
	}
	.th.sorted {
		height: 45.500px;
		padding-top: 2px;
		display: flex;
		flex-direction: column;
		align-items: flex-start;
		gap: 0;
		padding-left: 8px;
	}
	.tb {
		flex: 1;
		min-height: 0;
		overflow: hidden;
	}
	.row {
		padding: 1.500px 7px 1.700px;
		line-height: 28px;
		font-size: 19.200px;
		border-bottom: 1px solid transparent;
		color: #3b3a39;
		white-space: pre;
	}
	.row.alt {
		background: #ececec;
		border-bottom-color: #e4e4e4;
	}
	.col-b .row {
		padding-left: 8px;
		padding-right: 6px;
	}

	.sb {
		width: 13px;
		flex: none;
		background: #f3f3f3;
		position: relative;
		align-self: flex-start;
		height: 793px;
	}
	.sb-thumb {
		position: absolute;
		left: 0;
		right: 0;
		background: #c8c8c8;
	}
	.sb-arrow {
		position: absolute;
		left: 1.500px;
	}

	/* second column */
	.col-b {
		width: 403px;
		flex: none;
		margin-right: 15px;
	}
	.tbl-a {
		margin: 11px 4px 0 8px;
		height: 363px;
	}
	.tbl-a .th {
		height: 43px;
		padding-top: 0;
	}
	.tbl-b {
		height: 357px;
		gap: 2px;
	}
	.tbl-b .sb {
		width: 14px;
		height: 336px;
	}
	.tbl-c {
		margin-top: 13px;
		height: 351px;
		gap: 2px;
	}
	.tbl-c .sb {
		width: 14px;
		height: 342px;
	}

	/* charts */
	.col-c {
		flex: 1;
		min-width: 0;
		padding-top: 1px;
	}
	.chart {
		box-sizing: border-box;
	}
	.chart.indent {
		padding-left: 7px;
	}
	h2 {
		margin: 0;
		height: 30px;
		line-height: 30px;
		font-family: Roboto, sans-serif;
		font-weight: 400;
		font-size: 26.200px;
		color: #252423;
	}
	.legend {
		margin-top: 15px;
		height: 28px;
		display: flex;
		align-items: center;
		gap: 9.200px;
		font-size: 17.300px;
		color: #605e5c;
		white-space: nowrap;
		position: relative;
	}
	.legend b {
		font-weight: 700;
		margin-right: 3px;
	}
	.lg {
		display: flex;
		align-items: center;
		gap: 3px;
	}
	.lg i {
		width: 15px;
		height: 15px;
		border-radius: 50%;
		flex: none;
	}
	.lg-more {
		position: absolute;
		left: 1237px;
	}
	.plot-row {
		margin-top: 19px;
		display: flex;
		align-items: flex-start;
	}
	.y-title {
		width: 18px;
		height: 212px;
		flex: none;
		writing-mode: vertical-rl;
		transform: rotate(180deg);
		text-align: center;
		font-family: 'DejaVu Sans', sans-serif;
		font-weight: 700;
		font-size: 13px;
		line-height: 18px;
		color: #3b3a39;
	}
	.plot-col {
		flex: 1;
		min-width: 0;
	}
	.plot {
		height: 212px;
		box-sizing: border-box;
		padding: 9.400px 0;
		position: relative;
	}
	.grid-lines {
		position: absolute;
		top: 0;
		bottom: 0;
		left: 240px;
		right: 0;
		display: flex;
		justify-content: space-between;
		margin-right: -1px;
	}
	.grid-lines span {
		width: 1px;
		background-image: repeating-linear-gradient(to bottom, #c8c6c4 0 2px, transparent 2px 6px);
	}
	.plot-line {
		height: 32.200px;
		display: flex;
		align-items: center;
		position: relative;
	}
	.cat {
		width: 226px;
		margin-right: 14px;
		flex: none;
		text-align: right;
		font-size: 17.200px;
		color: #605e5c;
		white-space: nowrap;
	}
	.stack {
		flex: 1;
		min-width: 0;
		height: 25px;
		display: flex;
	}
	.stack span {
		height: 100%;
	}
	.axis {
		margin: 6px 0 0 240px;
		height: 24px;
		display: flex;
		justify-content: space-between;
		font-size: 16.500px;
		line-height: 24px;
		color: #605e5c;
	}
	.axis span {
		width: 0;
		display: flex;
		justify-content: center;
	}
	.axis em {
		font-style: normal;
		white-space: nowrap;
	}
	.x-title {
		margin: 3px 0 0 240px;
		line-height: 22px;
		text-align: center;
		font-family: Roboto, sans-serif;
		font-weight: 400;
		font-size: 16.800px;
		color: #252423;
	}
	.chart-scroll {
		width: 10px;
		margin-left: 24px;
		margin-right: 8px;
		height: 214px;
		flex: none;
		background: #f3f3f3;
		border-radius: 5px;
	}
	.chart-scroll div {
		height: 89px;
		background: #b8b8b8;
		border-radius: 5px;
	}

	/* side panes */
	.filters,
	.pane {
		box-sizing: border-box;
		display: flex;
		flex-direction: column;
		align-items: center;
		flex: none;
	}
	.filters {
		width: 50px;
		margin-left: 39px;
		border-left: 1px solid #a19f9d;
		background: #fff;
	}
	.pane {
		width: 49px;
		border-left: 1px solid #e1dfdd;
		background: #f3f2f1;
	}
	.pane-chev {
		margin-top: 25px;
		flex: none;
	}
	.funnel {
		margin-top: 52px;
		flex: none;
	}
	.pane-text {
		writing-mode: vertical-rl;
		margin-top: 15px;
		font-size: 22px;
		font-weight: 600;
		color: #252423;
	}
	.pane-text.lower {
		margin-top: 48px;
		color: #3b3a39;
	}

	/* page tabs */
	.pagebar {
		flex: 1;
		min-height: 0;
		display: flex;
		background: #f3f2f1;
		font-size: 17px;
	}
	.nav {
		width: 59px;
		box-sizing: border-box;
		display: flex;
		align-items: center;
		justify-content: center;
		gap: 24px;
	}
	.ptab {
		box-sizing: border-box;
		border-left: 1px solid #c8c6c4;
		display: flex;
		align-items: center;
		justify-content: center;
		position: relative;
		white-space: nowrap;
	}
	.ptab.active {
		background: #fff;
		font-weight: 600;
		color: #252423;
		border-bottom: 6px solid #f2c811;
		padding-top: 6px;
	}
	.px {
		position: absolute;
		right: 6px;
		top: 0;
		font-size: 18px;
		font-weight: 400;
	}
	.padd {
		width: 59px;
		height: 48px;
		margin-top: 2px;
		background: #f2c811;
		display: flex;
		align-items: center;
		justify-content: center;
	}

	.status {
		height: 35px;
		flex: none;
		box-sizing: border-box;
		padding-left: 7px;
		line-height: 35px;
		font-size: 17.300px;
		background: #f3f2f1;
		color: #605e5c;
	}

	/* taskbar */
	.taskbar {
		height: 60px;
		flex: none;
		background: #3b382e;
		color: #fff;
		display: flex;
	}
	.tasks {
		display: flex;
	}
	.task {
		height: 60px;
		display: flex;
		align-items: center;
		justify-content: center;
		position: relative;
		flex: none;
		box-sizing: border-box;
		padding-bottom: 2px;
	}
	.task.active {
		background: #625f55;
	}
	.task.on::after {
		content: '';
		position: absolute;
		left: 7px;
		right: 7px;
		bottom: 0;
		height: 4px;
		background: #76b9ed;
	}
	.task.active::after {
		left: 0;
		right: 0;
	}
	.sys {
		margin-left: auto;
		width: 821px;
		display: flex;
		align-items: center;
		flex: none;
	}
	.weather {
		margin-left: 12px;
		width: 229px;
		flex: none;
		font-size: 19.600px;
		white-space: nowrap;
	}
	.umbrella {
		flex: none;
	}
	.tray {
		display: flex;
	}
	.tray-item {
		display: flex;
		align-items: center;
		justify-content: center;
		flex: none;
	}
	.clock {
		width: 108px;
		flex: none;
		display: flex;
		flex-direction: column;
		align-items: center;
		gap: 6px;
		font-size: 17px;
		line-height: 22px;
	}
	.notif {
		position: relative;
		margin-left: 16px;
		margin-top: 18px;
		align-self: flex-start;
		width: 44px;
		flex: none;
	}
	.badge {
		position: absolute;
		left: 9px;
		top: 10px;
		width: 27px;
		height: 27px;
		line-height: 24px;
		box-sizing: border-box;
		border: 1.500px solid #bbb;
		background: #3b382e;
		border-radius: 50%;
		text-align: center;
		font-size: 15px;
		font-weight: 700;
	}
</style>
